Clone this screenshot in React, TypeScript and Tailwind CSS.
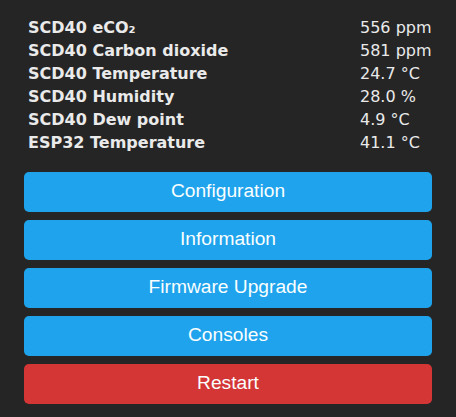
import React from "react";

const rows: [string, string][] = [
  ["SCD40 eCO₂", "556 ppm"],
  ["SCD40 Carbon dioxide", "581 ppm"],
  ["SCD40 Temperature", "24.7 °C"],
  ["SCD40 Humidity", "28.0 %"],
  ["SCD40 Dew point", "4.9 °C"],
  ["ESP32 Temperature", "41.1 °C"],
];

const buttons: [string, boolean][] = [
  ["Configuration", false],
  ["Information", false],
  ["Firmware Upgrade", false],
  ["Consoles", false],
  ["Restart", true],
];

export default function App() {
  return (
    <div className="min-h-[417px] w-[456px] bg-[#252525] text-[#eaeaea] pt-[16px] px-[24px]">
      <div className="w-[408px]">
        <div
          className="grid grid-cols-[1fr_76px] text-[16px] leading-[23px]"
          style={{ fontFamily: '"DejaVu Sans", Verdana, sans-serif' }}
        >
          {rows.map(([k, v]) => (
            <React.Fragment key={k}>
              <div className="pl-[4px] font-bold whitespace-nowrap">{k}</div>
              <div className="pl-[4px] whitespace-nowrap">{v}</div>
            </React.Fragment>
          ))}
        </div>
        <div
          className="mt-[18px] flex flex-col gap-[8px]"
          style={{ fontFamily: '"Liberation Sans", Arial, sans-serif' }}
        >
          {buttons.map(([label, red]) => (
            <button
              key={label}
              className={
                "h-[40px] w-full rounded-[5px] pb-[3px] text-center text-[19.2px] leading-[35px] text-[#faffff] " +
                (red ? "bg-[#d43535]" : "bg-[#1fa3ec]")
              }
            >
              {label}
            </button>
          ))}
        </div>
      </div>
    </div>
  );
}
